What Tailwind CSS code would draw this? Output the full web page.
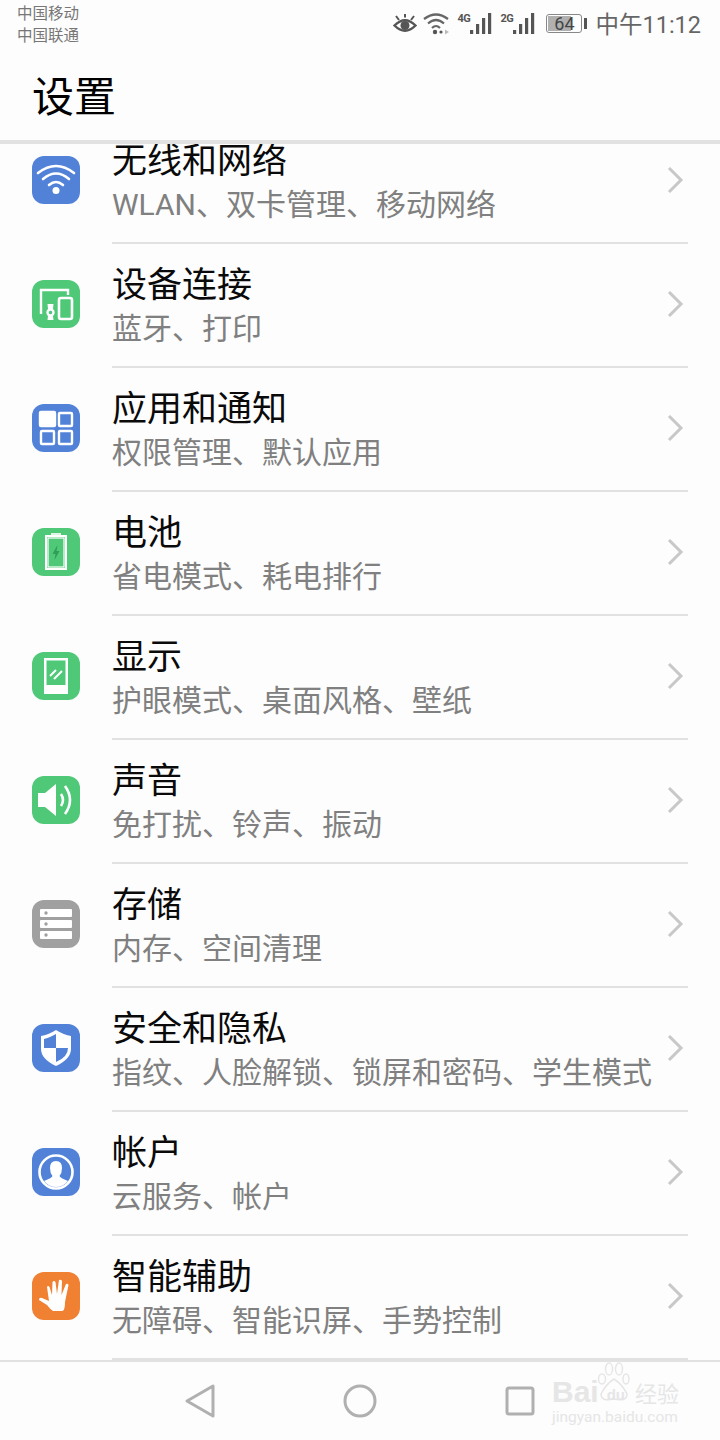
<!DOCTYPE html>
<html lang="zh"><head><meta charset="utf-8"><script src="https://cdn.jsdelivr.net/npm/@tailwindcss/browser@4"></script></head>
<body class="bg-[#fdfdfd]">
<div class="relative w-[720px] h-[1440px] overflow-hidden flex flex-col bg-[#fdfdfd] font-['Roboto','Noto_Sans_CJK_SC',sans-serif]">
<!-- status -->
<div class="h-[54px] shrink-0 flex justify-between pl-[17px] pr-[19px]">
 <div class="pt-[3px] text-[15.5px] leading-[22px] text-[#777]"><div>中国移动</div><div>中国联通</div></div>
 <div class="flex items-start pt-[13px] text-[#666]">
  <svg class="mt-[1px]" width="24" height="21" viewBox="0 0 24 21"><path d="M1.500 11.500Q12 1 22.500 11.500Q12 22 1.500 11.500Z" fill="none" stroke="#555" stroke-width="2.400"/><circle cx="12" cy="11.500" r="4.500" fill="#555"/><path d="M3 2l3 4M12 0v3.500M21 2l-3 4" stroke="#555" stroke-width="2"/></svg>
  <svg class="ml-[6px]" width="28" height="22" viewBox="0 0 28 22" fill="none" stroke="#666" stroke-width="2.200"><path d="M1 6Q13-3 25 6M5 10.500Q13 3.500 21 10.500M9 15Q13 11 17 15"/><circle cx="12" cy="19" r="2.200" fill="#555" stroke="none"/><circle cx="18" cy="19" r="1.600" fill="#555" stroke="none"/><path d="M22 16.500l4 2.500l-4 2.500z" fill="#bbb" stroke="none"/></svg>
  <div class="ml-[6px] w-[12px] text-[11px] leading-[10px] font-bold tracking-[-0.5px] mt-[1px] text-[#555]">4G</div>
  <svg width="23" height="21" viewBox="0 0 23 21" fill="#555"><rect x="1" y="17" width="3.200" height="4"/><rect x="7" y="11" width="3.200" height="10"/><rect x="13" y="5" width="3.200" height="16"/><rect x="19" y="0" width="3.200" height="21"/></svg>
  <div class="ml-[8px] w-[12px] text-[11px] leading-[10px] font-bold tracking-[-0.5px] mt-[1px] text-[#555]">2G</div>
  <svg width="23" height="21" viewBox="0 0 23 21" fill="#555"><rect x="1" y="17" width="3.200" height="4"/><rect x="7" y="11" width="3.200" height="10"/><rect x="13" y="5" width="3.200" height="16"/><rect x="19" y="0" width="3.200" height="21"/></svg>
  <div class="relative ml-[11px] mt-[1px] w-[36px] h-[19px] rounded-[3px] border border-[#888] overflow-hidden text-center text-[18px] leading-[17px] text-[#444]"><div class="absolute left-[1px] top-[1px] bottom-[1px] w-[23px] bg-[#b0b0b0]"></div><span class="relative">64</span></div>
  <div class="ml-[2px] mt-[5px] w-[3px] h-[11px] bg-[#555]"></div>
  <div class="ml-[8px] mt-[-2px] text-[23.5px] leading-[28px] text-[#666]">中午11:12</div>
 </div>
</div>
<!-- header -->
<div class="h-[86px] shrink-0 pl-[32px] pt-[20px] text-[42px] leading-[48px] text-black border-b-0">设置</div>
<div class="h-[4px] shrink-0 bg-[#e2e2e2]"></div>
<!-- list -->
<div class="flex-1 overflow-hidden min-h-0">
<div class="mt-[-24px]">

<div class="h-[124px] flex items-center pl-[32px]"><div class="mt-[-4px] w-[48px] h-[48px] rounded-[12px] bg-[#5282d8] shrink-0 flex items-center justify-center"><svg width="48" height="48" viewBox="0 0 48 48" fill="none" stroke="#fff" stroke-width="2.600" stroke-linecap="round"><path d="M6 17Q24 3 42 17M11 23Q24 12 37 23M17 29Q24 23 31 29"/><circle cx="24" cy="34.500" r="3.500" fill="#fff" stroke="none"/></svg></div>
<div class="ml-[32px] w-[576px] h-full border-b-2 border-[#e2e2e2] flex items-center justify-between pr-[3px]"><div class="pt-[4px]"><div class="text-[35px] leading-[44px] text-[#0a0a0a]">无线和网络</div><div class="text-[30px] leading-[42px] text-[#808080] whitespace-nowrap">WLAN、双卡管理、移动网络</div></div><svg class="mt-[-2px]" width="18" height="28" viewBox="0 0 18 28" fill="none" stroke="#c8c8c8" stroke-width="3"><path d="M2 2L14 14L2 26"/></svg></div></div>

<div class="h-[124px] flex items-center pl-[32px]"><div class="mt-[-4px] w-[48px] h-[48px] rounded-[12px] bg-[#4fc878] shrink-0 flex items-center justify-center"><svg width="48" height="48" viewBox="0 0 48 48" fill="none" stroke="#fff" stroke-width="2.400"><path d="M9 34V10H36V15"/><rect x="27" y="18" width="13" height="21" rx="2" stroke-width="2.600"/><circle cx="18.500" cy="32.500" r="3" stroke-width="2.400"/><path d="M15.500 24H21.500L21 29H16zM16 36H21L21.500 40H15.500z" fill="#fff" stroke="none"/></svg></div>
<div class="ml-[32px] w-[576px] h-full border-b-2 border-[#e2e2e2] flex items-center justify-between pr-[3px]"><div class="pt-[4px]"><div class="text-[35px] leading-[44px] text-[#0a0a0a]">设备连接</div><div class="text-[30px] leading-[42px] text-[#808080] whitespace-nowrap">蓝牙、打印</div></div><svg class="mt-[-2px]" width="18" height="28" viewBox="0 0 18 28" fill="none" stroke="#c8c8c8" stroke-width="3"><path d="M2 2L14 14L2 26"/></svg></div></div>

<div class="h-[124px] flex items-center pl-[32px]"><div class="mt-[-4px] w-[48px] h-[48px] rounded-[12px] bg-[#5282d8] shrink-0 flex items-center justify-center"><svg width="48" height="48" viewBox="0 0 48 48" fill="none" stroke="#fff" stroke-width="2.400"><rect x="8" y="8" width="15" height="14" rx="1" fill="#fff"/><rect x="27" y="9" width="13" height="13" rx="1"/><rect x="9" y="27" width="13" height="13" rx="1"/><rect x="27" y="27" width="13" height="13" rx="1"/></svg></div>
<div class="ml-[32px] w-[576px] h-full border-b-2 border-[#e2e2e2] flex items-center justify-between pr-[3px]"><div class="pt-[4px]"><div class="text-[35px] leading-[44px] text-[#0a0a0a]">应用和通知</div><div class="text-[30px] leading-[42px] text-[#808080] whitespace-nowrap">权限管理、默认应用</div></div><svg class="mt-[-2px]" width="18" height="28" viewBox="0 0 18 28" fill="none" stroke="#c8c8c8" stroke-width="3"><path d="M2 2L14 14L2 26"/></svg></div></div>

<div class="h-[124px] flex items-center pl-[32px]"><div class="mt-[-4px] w-[48px] h-[48px] rounded-[12px] bg-[#4fc878] shrink-0 flex items-center justify-center"><svg width="48" height="48" viewBox="0 0 48 48" fill="none" stroke="#fff" stroke-width="2"><path d="M19 5H29V7H19z" fill="#fff" stroke="none" opacity=".8"/><rect x="14" y="8" width="20" height="33"/><rect x="16" y="10" width="16" height="29" stroke-width="1.200"/><path d="M25.500 17L20.500 26H23.500L22.500 32L27.500 23H24.500z" stroke="none" fill="#2f9f57"/></svg></div>
<div class="ml-[32px] w-[576px] h-full border-b-2 border-[#e2e2e2] flex items-center justify-between pr-[3px]"><div class="pt-[4px]"><div class="text-[35px] leading-[44px] text-[#0a0a0a]">电池</div><div class="text-[30px] leading-[42px] text-[#808080] whitespace-nowrap">省电模式、耗电排行</div></div><svg class="mt-[-2px]" width="18" height="28" viewBox="0 0 18 28" fill="none" stroke="#c8c8c8" stroke-width="3"><path d="M2 2L14 14L2 26"/></svg></div></div>

<div class="h-[124px] flex items-center pl-[32px]"><div class="mt-[-4px] w-[48px] h-[48px] rounded-[12px] bg-[#4fc878] shrink-0 flex items-center justify-center"><svg width="48" height="48" viewBox="0 0 48 48"><path fill-rule="evenodd" d="M12 6H36V42H12zM14.500 8.500V33H33.500V8.500z" fill="#fff"/><path d="M18 24L24 18M22 27L30 19" stroke="#fff" stroke-width="2" fill="none"/></svg></div>
<div class="ml-[32px] w-[576px] h-full border-b-2 border-[#e2e2e2] flex items-center justify-between pr-[3px]"><div class="pt-[4px]"><div class="text-[35px] leading-[44px] text-[#0a0a0a]">显示</div><div class="text-[30px] leading-[42px] text-[#808080] whitespace-nowrap">护眼模式、桌面风格、壁纸</div></div><svg class="mt-[-2px]" width="18" height="28" viewBox="0 0 18 28" fill="none" stroke="#c8c8c8" stroke-width="3"><path d="M2 2L14 14L2 26"/></svg></div></div>

<div class="h-[124px] flex items-center pl-[32px]"><div class="mt-[-4px] w-[48px] h-[48px] rounded-[12px] bg-[#4fc878] shrink-0 flex items-center justify-center"><svg width="48" height="48" viewBox="0 0 48 48"><path d="M6 17H13L24 8V40L13 31H6z" fill="#fff"/><path d="M29 18Q33 24 29 30M33 10Q43 24 33 38" fill="none" stroke="#fff" stroke-width="2.600"/></svg></div>
<div class="ml-[32px] w-[576px] h-full border-b-2 border-[#e2e2e2] flex items-center justify-between pr-[3px]"><div class="pt-[4px]"><div class="text-[35px] leading-[44px] text-[#0a0a0a]">声音</div><div class="text-[30px] leading-[42px] text-[#808080] whitespace-nowrap">免打扰、铃声、振动</div></div><svg class="mt-[-2px]" width="18" height="28" viewBox="0 0 18 28" fill="none" stroke="#c8c8c8" stroke-width="3"><path d="M2 2L14 14L2 26"/></svg></div></div>

<div class="h-[124px] flex items-center pl-[32px]"><div class="mt-[-4px] w-[48px] h-[48px] rounded-[12px] bg-[#a0a0a0] shrink-0 flex items-center justify-center"><svg width="48" height="48" viewBox="0 0 48 48" fill="#fff"><rect x="8" y="9" width="32" height="8" rx="1"/><rect x="8" y="20" width="32" height="8" rx="1"/><rect x="8" y="31" width="32" height="8" rx="1"/><g fill="#a0a0a0"><circle cx="14" cy="13" r="1.700"/><circle cx="14" cy="24" r="1.700"/><circle cx="14" cy="35" r="1.700"/></g></svg></div>
<div class="ml-[32px] w-[576px] h-full border-b-2 border-[#e2e2e2] flex items-center justify-between pr-[3px]"><div class="pt-[4px]"><div class="text-[35px] leading-[44px] text-[#0a0a0a]">存储</div><div class="text-[30px] leading-[42px] text-[#808080] whitespace-nowrap">内存、空间清理</div></div><svg class="mt-[-2px]" width="18" height="28" viewBox="0 0 18 28" fill="none" stroke="#c8c8c8" stroke-width="3"><path d="M2 2L14 14L2 26"/></svg></div></div>

<div class="h-[124px] flex items-center pl-[32px]"><div class="mt-[-4px] w-[48px] h-[48px] rounded-[12px] bg-[#5282d8] shrink-0 flex items-center justify-center"><svg width="48" height="48" viewBox="0 0 48 48"><path d="M24 6Q16 11 9 12V25Q9 35 24 42Q39 35 39 25V12Q32 11 24 6Z" fill="#fff"/><path d="M24 10Q17 14 12 15V24H24zM24 24V38Q36 33 36 24z" fill="#5282d8"/></svg></div>
<div class="ml-[32px] w-[576px] h-full border-b-2 border-[#e2e2e2] flex items-center justify-between pr-[3px]"><div class="pt-[4px]"><div class="text-[35px] leading-[44px] text-[#0a0a0a]">安全和隐私</div><div class="text-[30px] leading-[42px] text-[#808080] whitespace-nowrap">指纹、人脸解锁、锁屏和密码、学生模式</div></div><svg class="mt-[-2px]" width="18" height="28" viewBox="0 0 18 28" fill="none" stroke="#c8c8c8" stroke-width="3"><path d="M2 2L14 14L2 26"/></svg></div></div>

<div class="h-[124px] flex items-center pl-[32px]"><div class="mt-[-4px] w-[48px] h-[48px] rounded-[12px] bg-[#5282d8] shrink-0 flex items-center justify-center"><svg width="48" height="48" viewBox="0 0 48 48"><circle cx="24" cy="24" r="16.500" fill="none" stroke="#fff" stroke-width="2.600"/><path d="M24 13Q30 13 30 20Q30 25 27.500 28Q28 30 36 33Q31 39 24 39Q17 39 12 33Q20 30 20.500 28Q18 25 18 20Q18 13 24 13Z" fill="#fff"/></svg></div>
<div class="ml-[32px] w-[576px] h-full border-b-2 border-[#e2e2e2] flex items-center justify-between pr-[3px]"><div class="pt-[4px]"><div class="text-[35px] leading-[44px] text-[#0a0a0a]">帐户</div><div class="text-[30px] leading-[42px] text-[#808080] whitespace-nowrap">云服务、帐户</div></div><svg class="mt-[-2px]" width="18" height="28" viewBox="0 0 18 28" fill="none" stroke="#c8c8c8" stroke-width="3"><path d="M2 2L14 14L2 26"/></svg></div></div>

<div class="h-[124px] flex items-center pl-[32px]"><div class="mt-[-4px] w-[48px] h-[48px] rounded-[12px] bg-[#f08032] shrink-0 flex items-center justify-center"><svg width="48" height="48" viewBox="0 0 48 48"><path d="M15 15Q16 13 17.500 15L20 23L20.500 10Q22 8 23.500 10L25 22L27 8Q29 7 30 9L29.500 23L34 12Q36 11 36.500 13L33 30Q33 39 30 39H21Q18 37 15 33L7 28Q7 25 10 26L17 29Z" fill="#fff"/></svg></div>
<div class="ml-[32px] w-[576px] h-full border-b-2 border-[#e2e2e2] flex items-center justify-between pr-[3px]"><div class="pt-[4px]"><div class="text-[35px] leading-[44px] text-[#0a0a0a]">智能辅助</div><div class="text-[30px] leading-[42px] text-[#808080] whitespace-nowrap">无障碍、智能识屏、手势控制</div></div><svg class="mt-[-2px]" width="18" height="28" viewBox="0 0 18 28" fill="none" stroke="#c8c8c8" stroke-width="3"><path d="M2 2L14 14L2 26"/></svg></div></div>

</div></div>
<!-- nav -->
<div class="h-[80px] shrink-0 border-t-2 border-[#e2e2e2] bg-[#fdfdfd] relative flex items-center">
 <div class="w-[720px] flex items-center">
  <svg class="ml-[184px]" width="32" height="36" viewBox="0 0 32 36" fill="none" stroke="#b0b0b0" stroke-width="3" stroke-linejoin="round"><path d="M29 3V33L3 18Z"/></svg>
  <svg class="ml-[126px]" width="36" height="36" viewBox="0 0 36 36" fill="none" stroke="#b0b0b0" stroke-width="3"><circle cx="18" cy="18" r="15"/></svg>
  <svg class="ml-[126px]" width="32" height="32" viewBox="0 0 32 32" fill="none" stroke="#b0b0b0" stroke-width="3"><rect x="3" y="3" width="26" height="26" rx="2"/></svg>
 </div>
 <!-- watermark -->
 <div class="absolute left-[552px] top-[18px] w-[130px] text-[#e6e6e6]">
  <div class="flex items-center h-[24px] text-[30px] leading-[24px] font-bold tracking-[0px] font-['Liberation_Sans',sans-serif] whitespace-nowrap">Bai<span class="text-[15px] ml-[8px] mt-[6px]">du</span><span class="text-[22px] font-normal ml-[10px] font-['Noto_Sans_CJK_SC',sans-serif]">经验</span></div>
  <div class="text-[15.5px] leading-[18px] mt-[4px] whitespace-nowrap">jingyan.baidu.com</div>
 </div>
 <svg class="absolute left-[596px] top-[0px]" width="36" height="42" viewBox="0 0 36 42" fill="none" stroke="#e6e6e6" stroke-width="1.500"><ellipse cx="6" cy="17" rx="3.500" ry="5"/><ellipse cx="13" cy="7" rx="3.500" ry="6"/><ellipse cx="23" cy="7" rx="3.500" ry="6"/><ellipse cx="30" cy="17" rx="3" ry="5"/><path d="M18 17Q26 22 31 32Q31 40 18 37Q5 40 5 32Q10 22 18 17Z"/></svg>
</div>
</div>
</body></html>
